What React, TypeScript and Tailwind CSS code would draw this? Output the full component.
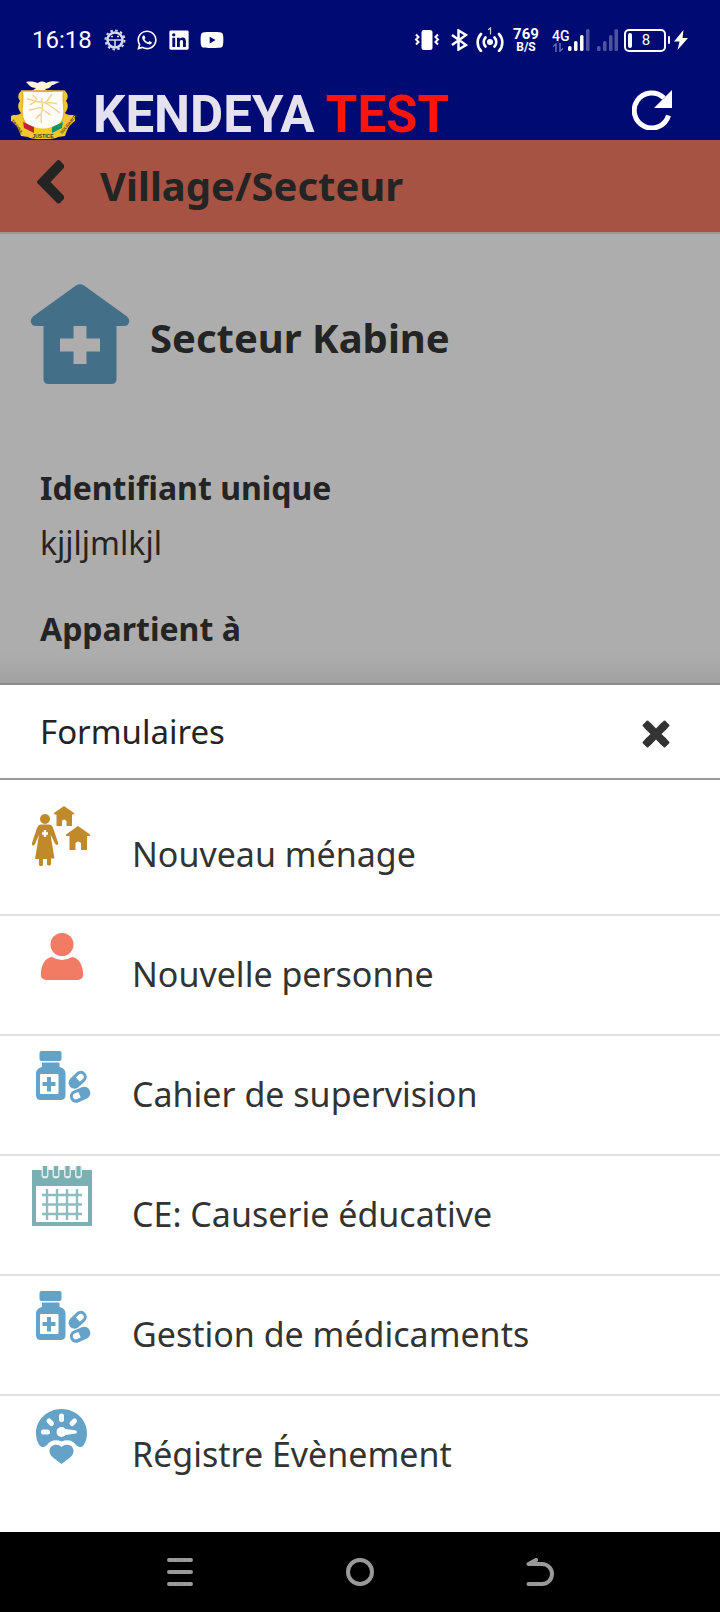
import type { ReactNode } from "react";
import { FaLinkedin, FaWhatsapp, FaYoutube } from "react-icons/fa";

function SunBadge() {
  return (
    <svg viewBox="0 0 22 22" className="size-[22px] text-[#d5d8f0]" aria-hidden="true">
      <circle cx="11" cy="11" r="9.500" fill="none" stroke="currentColor" strokeWidth="2" strokeDasharray="2.500 2.470" />
      <circle cx="11" cy="11" r="7.500" fill="none" stroke="currentColor" strokeWidth="2.500" />
      <path d="M4 11h14M11 11v7M7 7.500h2M13 7.500h2" stroke="currentColor" strokeWidth="1.600" />
    </svg>
  );
}

function StatusIcons() {
  return (
    <div className="flex h-8 items-center text-white">
      <svg viewBox="0 0 26 22" className="mr-2.5 h-[22px] w-[26px]" fill="none" stroke="currentColor" strokeWidth="2" aria-hidden="true">
        <rect x="7.500" y="1" width="11" height="20" rx="2.500" fill="currentColor" stroke="none" />
        <path d="M2 5.500 4.500 8 2 10.500 4.500 13 2 15.500M24 5.500 21.500 8l2.500 2.500-2.500 2.500 2.500 2.500" />
      </svg>
      <svg viewBox="0 0 18 22" className="mr-2 h-[22px] w-[18px]" fill="none" stroke="currentColor" strokeWidth="2.500" aria-hidden="true">
        <path d="m2 6 14 10-7.500 4.500V1.500L16 6 2 16" />
      </svg>
      <svg viewBox="0 0 28 26" className="mr-2 mb-0.5 h-[26px] w-7" fill="none" stroke="currentColor" strokeWidth="2.600" strokeLinecap="round" aria-hidden="true">
        <circle cx="14" cy="16" r="3" fill="currentColor" stroke="none" />
        <path d="M9.500 11.500a6.500 6.500 0 0 0 0 9M18.500 11.500a6.500 6.500 0 0 1 0 9M5 8a12.500 12.500 0 0 0 0 17M23 8a12.500 12.500 0 0 1 0 17" />
        <path d="M12.500 3.500 14.500 2v6" strokeWidth="1.200" opacity=".8" />
      </svg>
      <div className="mr-3 flex w-7 flex-col items-center font-bold">
        <span className="text-[15px] leading-[15px]">769</span>
        <span className="text-[12px] leading-[11px]">B/S</span>
      </div>
      <div className="flex w-5 flex-col">
        <span className="text-[14px] leading-[14px] font-medium">4G</span>
        <svg viewBox="0 0 12 9" className="h-[9px] w-3 opacity-40" fill="none" stroke="currentColor" strokeWidth="1.500" aria-hidden="true">
          <path d="M1 3.500 4 1v8M8 0v8l3-2.500" />
        </svg>
      </div>
      <svg viewBox="0 0 50 22" className="mr-1.5 -ml-1 h-[22px] w-[50px]" fill="currentColor" aria-hidden="true">
        <rect x="0" y="17" width="3.500" height="5" rx="1.500" />
        <rect x="6" y="12" width="3.500" height="10" rx="1.500" />
        <rect x="12" y="6" width="3.500" height="16" rx="1.500" />
        <g opacity=".3">
          <rect x="18" y="0" width="3.500" height="22" rx="1.500" />
          <rect x="29" y="17" width="3.500" height="5" rx="1.500" />
          <rect x="35" y="12" width="3.500" height="10" rx="1.500" />
          <rect x="41" y="6" width="3.500" height="16" rx="1.500" />
          <rect x="46.500" y="0" width="3.500" height="22" rx="1.500" />
        </g>
      </svg>
      <div className="flex h-[23px] w-[42px] items-center rounded-[5px] border-2 border-white pl-0.5">
        <span className="h-[15px] w-1 rounded-sm bg-white" />
        <span className="flex-1 pr-1 text-center text-[15px] leading-none">8</span>
      </div>
      <span className="mr-1 ml-0.5 h-2 w-0.5 rounded-sm bg-white" />
      <svg viewBox="0 0 14 20" className="h-5 w-3.5" fill="currentColor" aria-hidden="true">
        <path d="M9.500 0 0 11.500h5.500L3.500 20 14 8H8.500z" />
      </svg>
    </div>
  );
}

function CoatOfArms() {
  return (
    <svg viewBox="0 0 68 60" className="h-[60px] w-[68px]" aria-hidden="true">
      <path d="M12 11c-4 4-3 7-1 10-3 4-2 8 1 12-3 3-7 1-10 3l0 5c5 3 8 8 10 15l7 1c4 2 8 2 15 2s11 0 15-2l7-1c2-7 5-12 10-15l0-5c-3-2-7 0-10-3 3-4 4-8 1-12 2-3 3-6-1-10z" fill="#f2c72f" />
      <path d="M13 11h42c-2 6 0 13 0 21 0 12-9 18-21 20-12-2-21-8-21-20 0-8 2-15 0-21z" fill="#fffdf5" stroke="#e6b62c" strokeWidth="1.500" />
      <path d="M17 2c5-1 9 0 12 1 2-2 6-2 8 0 4-2 9-2 14-1-5 1-5 3-8 3-2 3-5 4-7 4l2 2H23l4-3c-5 0-7-3-10-6z" fill="#fff5d2" />
      <path d="M24 11h20" stroke="#d9a928" strokeWidth="1.500" />
      <path d="M32 43c1-4-1-7 1-12 2-4-1-8 0-13M33 22c-5 0-9-2-15-3M34 22c6 2 10 6 17 11M33 28c-5-1-8 2-13 2M35 23c4-1 5-5 8-9M33 34c-3 0-4 2-6 5M34 30c3 1 5 4 8 5M38 23c4-1 6 0 10 1M28 20c-1-3-3-4-4-5M27 21c-2 2-4 2-6 4" fill="none" stroke="#efd08a" strokeWidth="1.300" />
      <path d="m14 42 11 5v6l-10-5z" fill="#c7202f" />
      <path d="M25 47q9 3 18 0v6q-9 3-18 0z" fill="#f5c91d" />
      <path d="m54 42-11 5v6l10-5z" fill="#109562" />
      <g fill="#4a3b0c" fontFamily="Liberation Sans, sans-serif" fontWeight="700">
        <text x="34" y="58" fontSize="5" textAnchor="middle">JUSTICE</text>
        <text x="2" y="41" fontSize="4" transform="rotate(52 2 41)">TRAVAIL</text>
        <text x="53" y="54" fontSize="4" transform="rotate(-50 53 54)">SOLIDARITE</text>
      </g>
    </svg>
  );
}

function RefreshIcon() {
  return (
    <svg viewBox="0 0 40 40" className="size-10" aria-hidden="true">
      <path d="M36.500 25.500A17.500 17.500 0 1 1 32 8" fill="none" stroke="white" strokeWidth="5" />
      <path d="M40 0v18H22z" fill="white" />
    </svg>
  );
}

function ChevronIcon() {
  return (
    <svg viewBox="0 0 28 44" className="h-11 w-7" aria-hidden="true">
      <path
        d="M21 .700q1.500-1.200 3 0L28 5q1.200 1.400 0 2.800L14.500 22 28 36q1.200 1.400 0 2.800L24 43q-1.500 1.200-3 0L1.500 23.300q-1-1.300 0-2.600z"
        fill="#242424"
      />
    </svg>
  );
}

function ClinicIcon() {
  return (
    <svg viewBox="0 0 100 100" className="size-[100px]" fill="#446f88" aria-hidden="true">
      <path
        fillRule="evenodd"
        d="M46 1.500q4-2.500 8 0l43 31q3 3 2 6-1 3.500-5 3.500h-7.500v53q0 5-5 5h-63q-5 0-5-5V42H6q-4 0-5-3.500-1-3 2-6zM43.500 42v12.500H30v13h13.500V80h13V67.500H70v-13H56.500V42z"
      />
    </svg>
  );
}

function HouseholdIcon() {
  return (
    <svg viewBox="0 0 60 60" className="size-[60px]" fill="#c08a2b" aria-hidden="true">
      <circle cx="13" cy="13" r="5" />
      <path d="M9 18.500h8c3 0 4 3 5 6l4 12c1 3-2 3-3 1l-4.500-9 4 24H19v5.500c0 2-4 2-4 0V53h-4v5.500c0 2-4 2-4 0V53H3l4-24-4 9c-1 2-4 2-3-1l4-12c1-3 2-6.500 5-6.500z" />
      <path d="M11.800 24h2.400v2.300H16v2.400h-1.800V31h-2.400v-2.300H10v-2.400h1.800z" fill="white" />
      <path d="M32 0 42 7q1 1.500-1.500 1.500H40V20h-5.500v-5q-2.500-3-4.500 0v5h-5.500V8.500H23q-2-.5-1-1.500z" />
      <path d="M46 20 58 28.500q1 1.500-1.500 1.500H55v14h-6v-7q-3-3-5.500 0v7h-6V30H35q-2-.5-1-1.500z" />
    </svg>
  );
}

function PersonIcon() {
  return (
    <svg viewBox="0 0 60 60" className="size-[60px]" fill="#f27b64" aria-hidden="true">
      <circle cx="30" cy="18.500" r="11.500" />
      <path d="M20 31q10 6 20 0c7 1 10 7 11 15 1 6-2 8-6 8H15c-4 0-7-2-6-8 1-8 4-14 11-15z" />
    </svg>
  );
}

function MedicineIcon() {
  return (
    <svg viewBox="0 0 60 60" className="size-[60px]" fill="#65a2c8" aria-hidden="true">
      <rect x="7.500" y="5" width="22" height="10" rx="2" />
      <path d="M10 16.500h17.500V21c4 1 6 3 6 7v21q0 5-5 5H9q-5 0-5-5V28c0-4 2-6 6-7z" />
      <rect x="8" y="28" width="18.500" height="20" rx="1" fill="white" />
      <path d="M15 31h4v5h4.500v4H19v5.500h-4V40h-4.500v-4H15z" />
      <g transform="rotate(-44 45.500 34)">
        <rect x="35.500" y="28" width="20.500" height="12" rx="6" />
        <path d="M46 31h4q3 0 3 3t-3 3h-4z" fill="white" />
      </g>
      <g transform="rotate(-24 48 48.500)">
        <rect x="37.500" y="42.500" width="21" height="12.500" rx="6" />
        <path d="M47.500 45.500h-4q-3 0-3 3t3 3h4z" fill="white" />
      </g>
    </svg>
  );
}

function CalendarIcon() {
  return (
    <svg viewBox="0 0 60 60" className="size-[60px]" aria-hidden="true">
      <path d="M0 4h60v56H0z" fill="#79b0b2" />
      <path d="M4 20h52v36H4z" fill="white" />
      <g stroke="#dcebec" strokeWidth="7" strokeLinecap="round">
        <path d="M13 2v7M24 2v7M35.500 2v7M46.500 2v7" />
      </g>
      <g stroke="#79b0b2" strokeWidth="4">
        <path d="M13 0v10M24 0v10M35.500 0v10M46.500 0v10" />
      </g>
      <g stroke="#8fbdbf" strokeWidth="2.400">
        <path d="M15 23v31M25 23v31M35 23v31M45 23v31M10 29h40M10 38.500h40M10 48h40" />
      </g>
    </svg>
  );
}

function GaugeHeartIcon() {
  return (
    <svg viewBox="0 0 60 60" className="size-[60px]" fill="#65a2c8" aria-hidden="true">
      <path d="M29.500 3C15 3 4 14 4 27c0 5 1 9 4 13 2 2 5 1 7-1 3-5 9-6 14.500-3.500C35 33 41 34 44 39c2 2 5 3 7 1 3-4 4-8 4-13C55 14 44 3 29.500 3z" />
      <path d="M29.500 41c4-4 12-2.500 12 4 0 3-1.500 5-3.500 6.500L29.500 58 21 51.500c-2-1.500-3.500-3.500-3.500-6.500 0-6.500 8-8 12-4z" />
      <g stroke="white" strokeWidth="5" strokeLinecap="round">
        <path d="M29.500 10v3.500M17 15l2.500 2.500M42.500 15 40 17.500M11.500 26h4" />
      </g>
      <circle cx="29.500" cy="26" r="5" fill="white" />
      <path d="m30 22.500 14 2q2 1.500 0 3l-14 2z" fill="white" />
    </svg>
  );
}

const forms: { label: string; icon: ReactNode }[] = [
  { label: "Nouveau ménage", icon: <HouseholdIcon /> },
  { label: "Nouvelle personne", icon: <PersonIcon /> },
  { label: "Cahier de supervision", icon: <MedicineIcon /> },
  { label: "CE: Causerie éducative", icon: <CalendarIcon /> },
  { label: "Gestion de médicaments", icon: <MedicineIcon /> },
  { label: "Régistre Évènement", icon: <GaugeHeartIcon /> },
];

export default function App() {
  return (
    <div className="flex min-h-screen flex-col bg-white font-['Noto_Sans',sans-serif] text-[#333333]">
      <header className="bg-[#000a73] font-[Roboto,sans-serif] text-white">
        <div className="flex h-20 items-center justify-between px-8">
          <div className="flex items-center">
            <time className="mr-3 text-2xl">16:18</time>
            <div className="flex items-center gap-2.5">
              <SunBadge />
              <FaWhatsapp className="size-[22px]" />
              <FaLinkedin className="size-[22px]" />
              <FaYoutube className="size-6" />
            </div>
          </div>
          <StatusIcons />
        </div>
        <div className="flex h-[60px] items-center pr-12 pl-[9px]">
          <CoatOfArms />
          <h1 className="ml-4 flex-1 pt-2.5 text-[51px] leading-[50px] font-bold text-[#e6e1ef]">
            KENDEYA <span className="text-[#ff1408]">TEST</span>
          </h1>
          <button type="button" aria-label="Actualiser">
            <RefreshIcon />
          </button>
        </div>
      </header>

      <main className="flex flex-1 flex-col bg-[#adadad] text-[#242424]">
        <div className="flex h-[94px] items-center border-b-2 border-[#a09696] bg-[#a65343] pl-9">
          <button type="button" aria-label="Retour" className="-mt-2">
            <ChevronIcon />
          </button>
          <h2 className="ml-9 text-[40px] leading-[56px] font-bold">Village/Secteur</h2>
        </div>
        <div className="flex items-center gap-5 px-[30px] pt-[50px]">
          <ClinicIcon />
          <h3 className="pt-2 text-[40px] leading-[56px] font-bold">Secteur Kabine</h3>
        </div>
        <dl className="px-10 pt-20 text-[32px] leading-[48px]">
          <dt className="font-bold">Identifiant unique</dt>
          <dd className="pt-[7px]">kjjljmlkjl</dd>
          <dt className="pt-[38px] font-bold">Appartient à</dt>
        </dl>
        <div className="min-h-[30px] flex-1 bg-linear-to-b from-[#adadad] to-[#a1a1a1]" />
      </main>

      <section aria-label="Formulaires" className="border-t-2 border-[#8b8b8b] bg-white">
        <div className="flex h-[95px] items-center justify-between border-b-2 border-[#999999] pr-[50px] pl-10">
          <h2 className="text-[33px] leading-[48px] text-[#242424]">Formulaires</h2>
          <button type="button" aria-label="Fermer" className="pt-1">
            <svg viewBox="0 0 28 28" className="size-7" aria-hidden="true">
              <path d="m5.500 5.500 17 17M22.500 5.500l-17 17" stroke="#333333" strokeWidth="8" />
              <path
                d="m5.500 1.500-4 4 4 4 4-4zM22.500 1.500l4 4-4 4-4-4zM5.500 26.500l-4-4 4-4 4 4zM22.500 26.500l4-4-4-4-4 4z"
                fill="#333333"
                stroke="#333333"
                strokeWidth="2"
                strokeLinejoin="round"
              />
            </svg>
          </button>
        </div>
        <ul className="pt-4 pb-[18px] text-[34px] leading-[48px]">
          {forms.map((form) => (
            <li key={form.label} className="border-b-2 border-[#e0e0e0] last:border-b-0">
              <button type="button" className="flex h-[118px] w-full items-start pt-2.5 pl-8 text-left">
                {form.icon}
                <span className="ml-10 pt-6">{form.label}</span>
              </button>
            </li>
          ))}
        </ul>
      </section>

      <nav className="flex h-20 items-center justify-center gap-[152px] bg-black text-[#999999]">
        <button type="button" aria-label="Applications récentes">
          <svg viewBox="0 0 28 28" className="size-7" fill="none" stroke="currentColor" strokeWidth="4" strokeLinecap="round" aria-hidden="true">
            <path d="M3 2h22M3 14h22M3 26h22" />
          </svg>
        </button>
        <button type="button" aria-label="Accueil">
          <svg viewBox="0 0 28 28" className="size-7" fill="none" stroke="currentColor" strokeWidth="4" aria-hidden="true">
            <circle cx="14" cy="14" r="12" />
          </svg>
        </button>
        <button type="button" aria-label="Précédent">
          <svg viewBox="0 0 28 28" className="size-7" fill="none" stroke="currentColor" strokeWidth="4" strokeLinecap="round" strokeLinejoin="round" aria-hidden="true">
            <path d="M10 2 2.500 6H16a10 10 0 0 1 0 20H2.500" />
          </svg>
        </button>
      </nav>
    </div>
  );
}
